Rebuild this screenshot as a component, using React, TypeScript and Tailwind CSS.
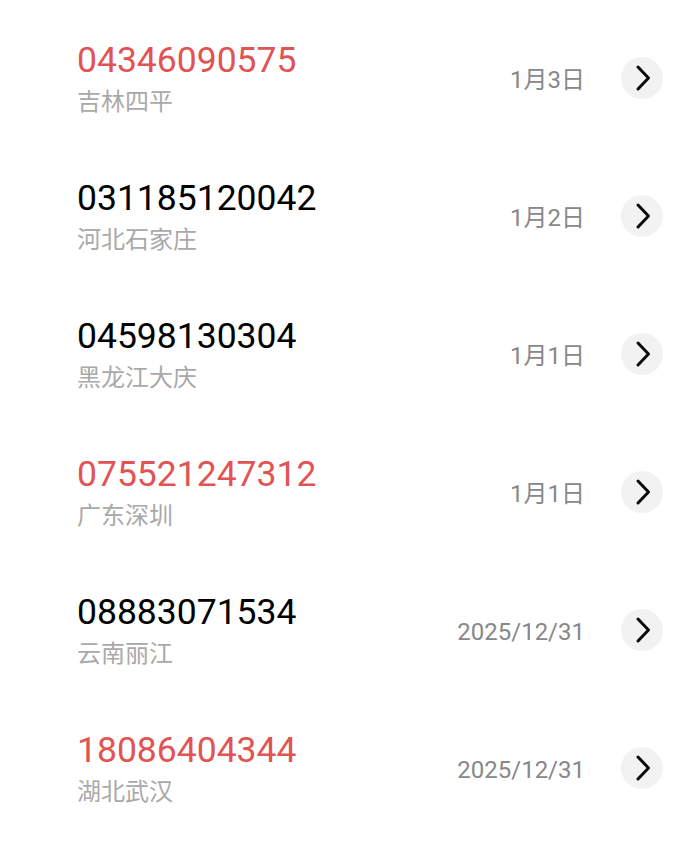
import React from "react";

const calls = [
  { number: "04346090575", place: "吉林四平", date: "1月3日", missed: true },
  { number: "031185120042", place: "河北石家庄", date: "1月2日", missed: false },
  { number: "04598130304", place: "黑龙江大庆", date: "1月1日", missed: false },
  { number: "075521247312", place: "广东深圳", date: "1月1日", missed: true },
  { number: "08883071534", place: "云南丽江", date: "2025/12/31", missed: false },
  { number: "18086404344", place: "湖北武汉", date: "2025/12/31", missed: true },
];

function Chevron() {
  return (
    <div className="w-[42px] h-[42px] rounded-full bg-[#f2f2f2] flex items-center justify-center shrink-0">
      <svg width="20" height="28" viewBox="0 0 20 28" fill="none" className="ml-[3px]">
        <path d="M4 3 L14.5 14 L4 25" stroke="#0a0a0a" strokeWidth="3" strokeLinecap="round" strokeLinejoin="round" />
      </svg>
    </div>
  );
}

export default function App() {
  return (
    <div
      className="w-[684px] h-[848px] bg-white overflow-hidden pt-[9px]"
      style={{ fontFamily: 'Roboto, "Noto Sans CJK SC", sans-serif' }}
    >
      {calls.map((c, i) => (
        <div key={i} className="h-[138px] flex items-center pl-[77px] pr-[21px]">
          <div className="flex-1 flex flex-col mt-[4px]">
            <span
              className={`text-[35.5px] leading-[40px] ${c.missed ? "text-[#e25353]" : "text-black"}`}
            >
              {c.number}
            </span>
            <span className="text-[24px] leading-[36px] text-[#a9a9a9] mt-[4px]">{c.place}</span>
          </div>
          <span className="text-[24px] text-[#888888] mr-[36px] mt-[3px]">{c.date}</span>
          <Chevron />
        </div>
      ))}
    </div>
  );
}
